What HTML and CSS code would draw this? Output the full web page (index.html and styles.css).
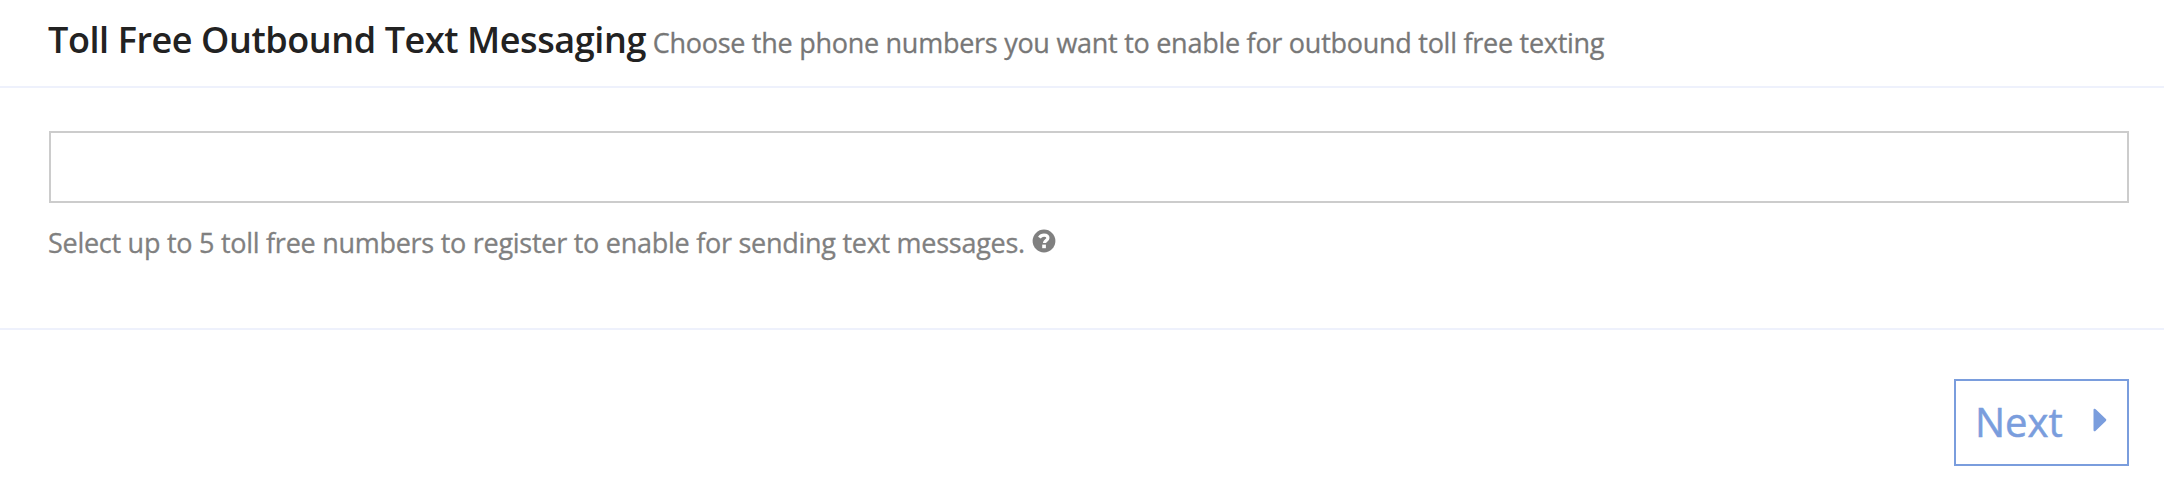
FILE: index.html
```html
<!DOCTYPE html>
<html lang="en">
<head>
<meta charset="utf-8">
<title>Toll Free Outbound Text Messaging</title>
<link rel="stylesheet" href="styles.css">
</head>
<body>
<header class="panel-header">
<h1 class="title">Toll Free Outbound Text Messaging<small class="subtitle"> Choose the phone numbers you want to enable for outbound toll free texting</small></h1>
</header>
<main class="panel-body">
<input class="number-input" type="text" aria-label="Toll free numbers">
<p class="help"><span class="help-text">Select up to 5 toll free numbers to register to enable for sending text messages.</span>
<svg class="help-icon" viewBox="0 0 24 24" aria-hidden="true"><circle cx="12" cy="12" r="11.4" fill="currentColor"/><path d="M7.4 8.7C8.5 7 10 6.1 12 6.1c2.5 0 3.9 1.3 3.9 3 0 2.4-3.4 2.2-3.4 5" fill="none" stroke="#fff" stroke-width="3.2"/><path d="M10.2 15.6h3.7v3.6h-3.7z" fill="#fff"/></svg></p>
</main>
<footer class="panel-footer">
<button class="next" type="button"><span class="next-label">Next</span><svg class="next-icon" viewBox="0 0 14 24" aria-hidden="true"><path d="M.5 2v20c0 1.4 1.2 1.8 2.2.8l10.2-9.9c.6-.6.6-1.2 0-1.8L2.7 1.2C1.7.2.5.6.5 2z" fill="currentColor"/></svg></button>
</footer>
</body>
</html>
```
FILE: styles.css
```css
* { box-sizing: border-box; }
body {
  margin: 0;
  background: #fff;
  font-family: "Open Sans", sans-serif;
}
.panel-header {
  height: 88px;
  padding: 16px 48px 0;
  border-bottom: 2px solid #eef1fc;
}
.title {
  margin: 0;
  color: #222;
  font-size: 36px;
  font-weight: 600;
  line-height: 48px;
  letter-spacing: -0.42px;
  white-space: nowrap;
}
.subtitle {
  color: #777;
  font-size: 27px;
  font-weight: 400;
  letter-spacing: -0.27px;
  -webkit-text-stroke: 0.3px currentColor;
}
.panel-body {
  height: 242px;
  padding: 43px 35px 0 49px;
  border-bottom: 2px solid #eef1fc;
}
.number-input {
  display: block;
  width: 100%;
  height: 72px;
  border: 2px solid #ccc;
  background: #fff;
}
.help {
  display: flex;
  align-items: flex-start;
  gap: 7px;
  margin: 20px 0 0 -1px;
  color: #808080;
  font-size: 27px;
  line-height: 40px;
  letter-spacing: -0.27px;
}
.help-text {
  -webkit-text-stroke: 0.3px currentColor;
}
.help-icon {
  width: 24px;
  height: 24px;
  margin-top: 6px;
}
.panel-footer {
  display: flex;
  justify-content: flex-end;
  padding: 49px 35px 0;
}
.next {
  display: flex;
  align-items: center;
  justify-content: space-between;
  width: 175px;
  height: 87px;
  padding: 0 20px 0 19px;
  border: 2px solid #7a9ddd;
  background: #fff;
  color: #7a9ddd;
  font: 400 40px/54px "Open Sans", sans-serif;
}
.next-label {
  margin-bottom: 2px;
  -webkit-text-stroke: 0.5px currentColor;
}
.next-icon {
  width: 14px;
  height: 24px;
  margin-bottom: 5px;
}
```
